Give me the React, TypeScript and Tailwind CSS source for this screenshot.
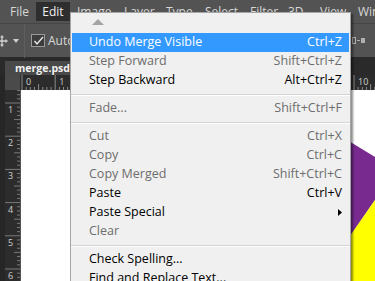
import React from "react";

type Item =
  | { sep: true }
  | { label: string; sc?: string; dis?: boolean; hl?: boolean; sub?: boolean };

const items: Item[] = [
  { label: "Undo Merge Visible", sc: "Ctrl+Z", hl: true },
  { label: "Step Forward", sc: "Shift+Ctrl+Z", dis: true },
  { label: "Step Backward", sc: "Alt+Ctrl+Z" },
  { sep: true },
  { label: "Fade...", sc: "Shift+Ctrl+F", dis: true },
  { sep: true },
  { label: "Cut", sc: "Ctrl+X", dis: true },
  { label: "Copy", sc: "Ctrl+C", dis: true },
  { label: "Copy Merged", sc: "Shift+Ctrl+C", dis: true },
  { label: "Paste", sc: "Ctrl+V" },
  { label: "Paste Special", sub: true },
  { label: "Clear", dis: true },
  { sep: true },
  { label: "Check Spelling..." },
  { label: "Find and Replace Text..." },
];

const menus = [
  { t: "File", w: "w-[36px] pl-[10px]" },
  { t: "Edit", w: "w-[34px] justify-center bg-[#2e2e2e] text-[#f0f0f0]" },
  { t: "Image", w: "w-[47px] pl-[7px]" },
  { t: "Layer", w: "w-[42px] pl-[7px]" },
  { t: "Type", w: "w-[39px] pl-[7px]" },
  { t: "Select", w: "w-[45px] pl-[7px]" },
  { t: "Filter", w: "w-[38px] pl-[7px]" },
  { t: "3D", w: "w-[32px] pl-[7px]" },
  { t: "View", w: "w-[38px] pl-[7px]" },
  { t: "Win", w: "w-[30px] pl-[7px]" },
];

const STEP = 33.2;

function HRuler() {
  const ticks: React.ReactNode[] = [];
  for (let n = 0; n < 11; n++) {
    const x = 2 + STEP * n;
    ticks.push(<line key={"m" + n} x1={x} y1={0} x2={x} y2={15} stroke="#8a8a8a" strokeWidth={1} />);
    for (let k = 1; k < 8; k++) {
      const xx = x + (STEP / 8) * k;
      const h = k === 4 ? 6 : 3;
      ticks.push(<line key={"t" + n + k} x1={xx} y1={15 - h} x2={xx} y2={15} stroke="#8a8a8a" strokeWidth={1} />);
    }
    if (n === 0 || n === 1 || n === 10)
      ticks.push(
        <text key={"l" + n} x={x + 4} y={10} fill="#cfcfcf" fontSize={9} fontFamily="Open Sans, sans-serif">
          {n}
        </text>
      );
  }
  return (
    <svg width={355} height={15} className="block">
      <rect width={355} height={15} fill="#2c2c2c" />
      {ticks}
    </svg>
  );
}

function VRuler() {
  const ticks: React.ReactNode[] = [];
  for (let n = 0; n < 7; n++) {
    const y = 13 + STEP * (n - 1);
    ticks.push(<line key={"m" + n} x1={0} y1={y} x2={15} y2={y} stroke="#7a7a7a" strokeWidth={1} />);
    for (let k = 1; k < 8; k++) {
      const yy = y + (STEP / 8) * k;
      const w = k === 4 ? 6 : 3;
      ticks.push(<line key={"t" + n + k} x1={15 - w} y1={yy} x2={15} y2={yy} stroke="#7a7a7a" strokeWidth={1} />);
    }
    if (n >= 1)
      ticks.push(
        <text key={"l" + n} x={3} y={y + 10} fill="#cfcfcf" fontSize={9} fontFamily="Open Sans, sans-serif">
          {n}
        </text>
      );
  }
  return (
    <svg width={15} height={191} className="block">
      <rect width={15} height={191} fill="#2c2c2c" />
      {ticks}
    </svg>
  );
}

export default function App() {
  return (
    <div className="relative w-[375px] h-[281px] overflow-hidden bg-[#535353] font-['Open_Sans',sans-serif] flex flex-col">
      {/* Menu bar */}
      <div className="h-[23px] flex items-center text-[12px] text-[#d8d8d8] shrink-0">
        {menus.map((m) => (
          <div key={m.t} className={"h-[19px] flex items-center shrink-0 whitespace-nowrap " + m.w}>
            {m.t}
          </div>
        ))}
      </div>
      {/* Options toolbar */}
      <div className="h-[34px] shrink-0 border-t border-[#464646] flex items-center relative">
        <svg width={12} height={12} viewBox="0 0 12 12" className="ml-[-4px] shrink-0">
          <path d="M6 0 L8 2.5 H6.7 V5.3 H9.5 V4 L12 6 L9.5 8 V6.7 H6.7 V9.5 H8 L6 12 L4 9.5 H5.3 V6.7 H2.5 V8 L0 6 L2.5 4 V5.3 H5.3 V2.5 H4 Z" fill="#cfcfcf" />
        </svg>
        <svg width={6} height={4} viewBox="0 0 6 4" className="ml-[5px] shrink-0">
          <path d="M0 0 H6 L3 4 Z" fill="#d0d0d0" />
        </svg>
        <div className="ml-[5px] w-[1px] h-[34px] bg-[#3e3e3e] border-r border-[#5e5e5e] shrink-0" />
        <div className="ml-[6px] w-[14px] h-[13px] border border-[#9a9a9a] bg-[#3c3c3c] flex items-center justify-center shrink-0">
          <svg width={11} height={10} viewBox="0 0 11 10">
            <path d="M1.5 5 L4 8 L10 1" stroke="#e8e8e8" strokeWidth={1.4} fill="none" />
          </svg>
        </div>
        <span className="ml-[3px] text-[12px] text-[#d8d8d8] whitespace-nowrap">Auto-</span>
        <div className="ml-auto mr-[10px] flex items-center gap-[1px]">
          <div className="w-[4px] h-[7px] border border-[#b0b0b0]" />
          <div className="w-[3px] h-[1px] bg-[#b0b0b0]" />
          <div className="w-[4px] h-[5px] bg-[#b0b0b0]" />
        </div>
      </div>
      {/* Document tab bar */}
      <div className="h-[18px] shrink-0 bg-[#2a2a2a] flex items-end pl-[5px]">
        <div className="h-[14px] w-[120px] overflow-hidden bg-[#494949] flex items-center pl-[10px] text-[10.5px] font-bold text-[#f2f2f2] whitespace-nowrap leading-none">
          merge.psd
        </div>
      </div>
      {/* Horizontal ruler row */}
      <div className="h-[15px] shrink-0 flex">
        <div className="w-[5px] bg-[#262626]" />
        <div className="w-[15px] bg-[#4a4a4a]" />
        <HRuler />
      </div>
      {/* Main */}
      <div className="flex-1 flex min-h-0">
        <div className="w-[5px] bg-[#262626] shrink-0" />
        <div className="shrink-0 border-r border-[#555555]">
          <VRuler />
        </div>
        <div className="relative flex-1 bg-white">
          <svg className="absolute inset-0" width={354} height={191}>
            <polygon points="300,34 354,67 354,110 300,188" fill="#782a8f" />
            <polygon points="300,188 354,110 354,191 300,191" fill="#ffff00" />
          </svg>
        </div>
      </div>

      {/* Edit dropdown menu */}
      <div className="absolute left-[70px] top-[12px] w-[281px] bg-[#f0f0f0] border border-[#a5a5a5] shadow-[2px_2px_2px_rgba(0,0,0,0.45)] text-[12.5px]">
        <div className="h-[20px] pl-[21px] pt-[6px]">
          <svg width={12} height={6} viewBox="0 0 12 6" className="block">
            <path d="M0 6 L6 0 L12 6 Z" fill="#a3a3a3" />
          </svg>
        </div>
        {items.map((it, i) =>
          "sep" in it ? (
            <div key={i} className="h-[9px] flex flex-col justify-center">
              <div className="h-[1px] bg-[#d4d4d4]" />
              <div className="h-[1px] bg-white" />
            </div>
          ) : (
            <div
              key={i}
              className={
                "h-[19px] mx-[1px] flex items-center justify-between pl-[17px] pr-[7px] whitespace-nowrap " +
                (it.hl ? "bg-[#3399ff] text-white" : it.dis ? "text-[#6d6d6d]" : "text-black")
              }
            >
              <span>{it.label}</span>
              {it.sc ? <span>{it.sc}</span> : null}
              {it.sub ? (
                <svg width={4} height={7} viewBox="0 0 4 7">
                  <path d="M0 0 L4 3.5 L0 7 Z" fill="#000" />
                </svg>
              ) : null}
            </div>
          )
        )}
      </div>
    </div>
  );
}
